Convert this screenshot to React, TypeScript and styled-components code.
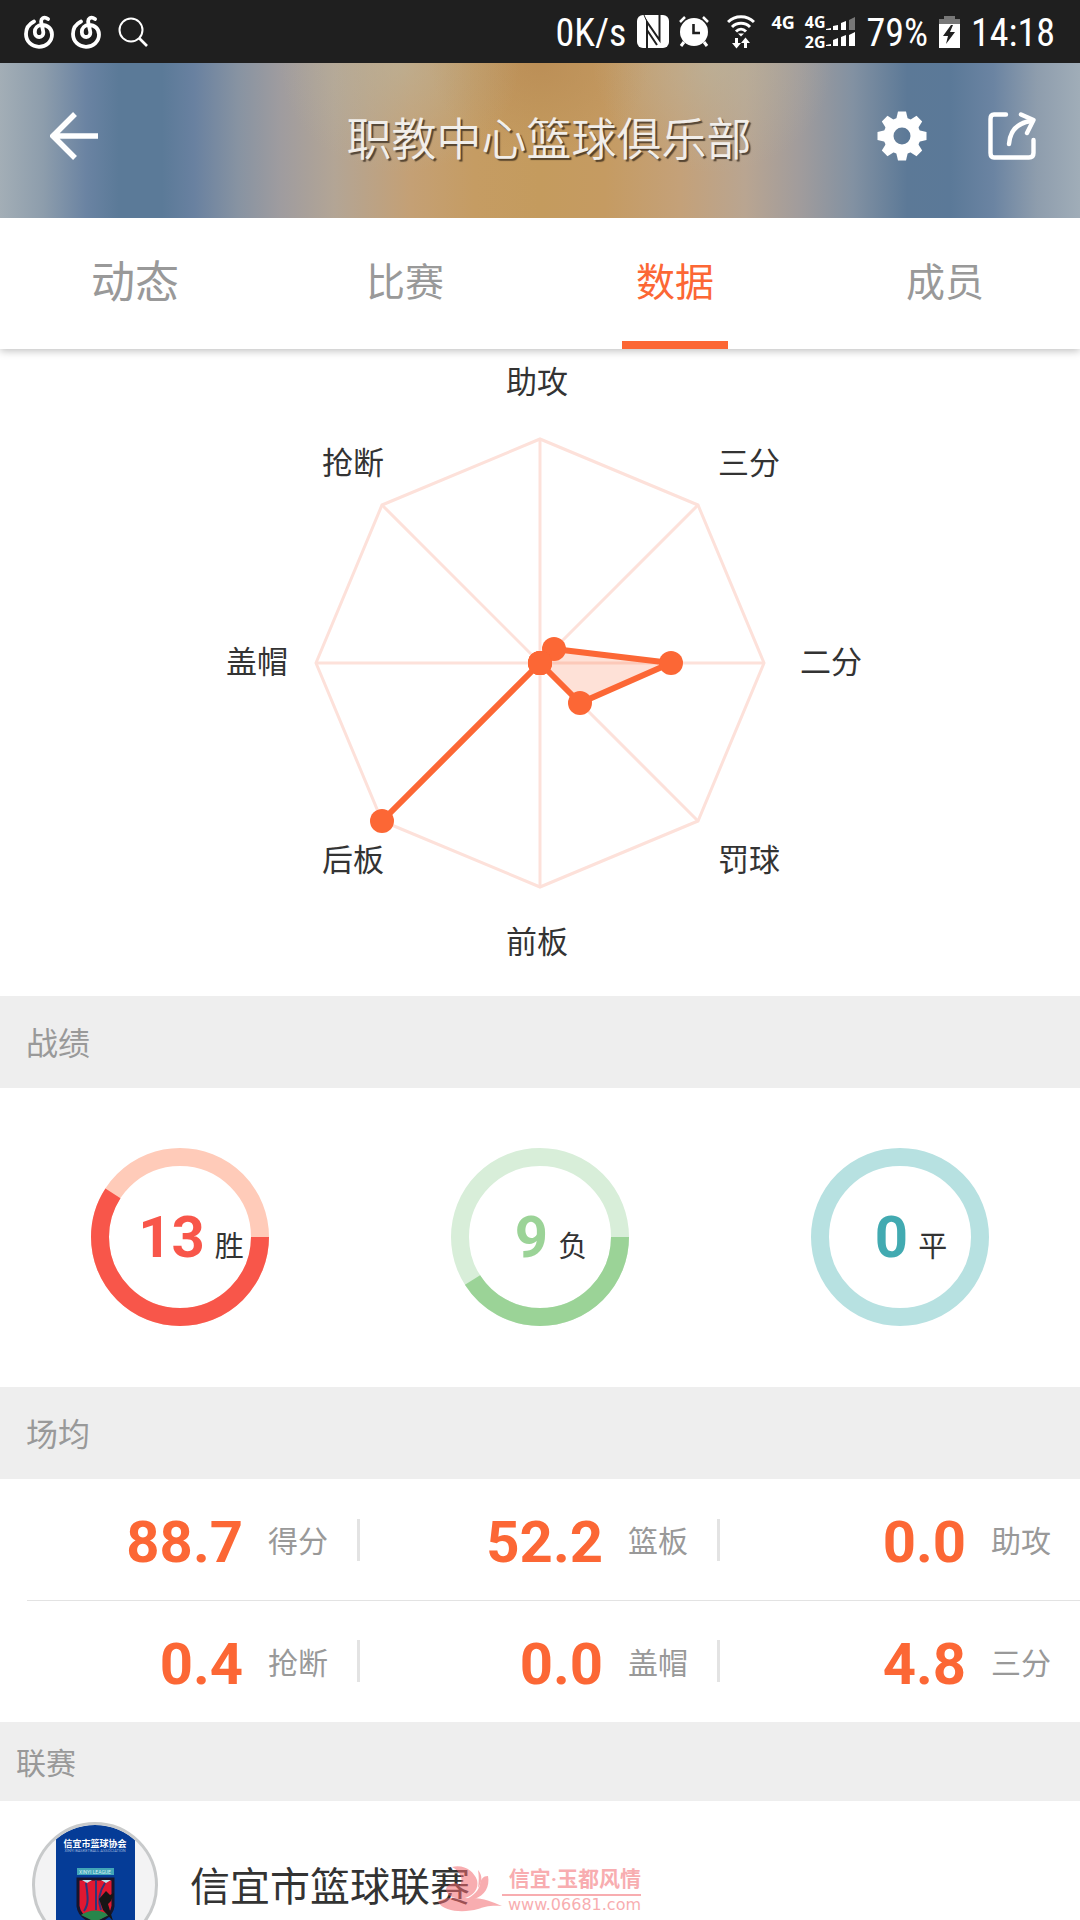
import styled, { createGlobalStyle } from "styled-components";

const ORANGE = "#fc6735";

const TABS = [
  { name: "动态", large: true },
  { name: "比赛" },
  { name: "数据", active: true },
  { name: "成员" },
];

// value is the share of the full axis, x / y is the middle of the label
const AXES = [
  { label: "助攻", value: 0, x: 537, y: 33 },
  { label: "三分", value: 0.09, x: 749, y: 114 },
  { label: "二分", value: 0.585, x: 831, y: 313 },
  { label: "罚球", value: 0.25, x: 749, y: 511 },
  { label: "前板", value: 0, x: 537, y: 593 },
  { label: "后板", value: 1, x: 353, y: 511 },
  { label: "盖帽", value: 0, x: 257, y: 313 },
  { label: "抢断", value: 0, x: 353, y: 114 },
];

const GAMES = 22;

const RECORDS = [
  { count: 13, label: "胜", color: "#f8564a", track: "#ffcbb9" },
  { count: 9, label: "负", color: "#9bd397", track: "#d8eed9" },
  { count: 0, label: "平", color: "#42aab1", track: "#b7e1e1" },
];

const AVERAGES = [
  [
    { value: "88.7", label: "得分" },
    { value: "52.2", label: "篮板" },
    { value: "0.0", label: "助攻" },
  ],
  [
    { value: "0.4", label: "抢断" },
    { value: "0.0", label: "盖帽" },
    { value: "4.8", label: "三分" },
  ],
];

const MusicIcon = () => (
  <svg width="30" height="34" viewBox="0 0 30 34" fill="none" stroke="#fff" strokeWidth="3.8" strokeLinecap="round">
    <path d="M10 6.5C5 9 2 13.500 2 19C2 26.500 7.800 31.800 15 31.800S28 26.500 28 19.500C28 13.500 23.500 10 18 10C13.500 10 10.800 13 10.800 17C10.800 20 12.800 22 15.200 22C18 22 19.800 19.500 19.200 16.500L17.300 7.500C16.500 3.500 20 1 24 4" />
  </svg>
);

const SearchIcon = () => (
  <svg width="30" height="30" viewBox="0 0 30 30" fill="none" stroke="#fff" strokeWidth="2">
    <circle cx="13" cy="13" r="11.500" />
    <path d="M21 21L29 29" strokeWidth="2.600" />
  </svg>
);

const NfcIcon = () => (
  <svg width="32" height="34" viewBox="0 0 32 34">
    <rect width="32" height="33" rx="6" fill="#fff" />
    <path d="M10 34V7L22.500 25V0M10 15L20 30" fill="none" stroke="#1f1f1f" strokeWidth="2" />
    <path d="M7 0L10.500 8" stroke="#1f1f1f" strokeWidth="1" />
  </svg>
);

const AlarmIcon = () => (
  <svg width="30" height="33" viewBox="0 0 30 33" fill="none" stroke="#fff">
    <circle cx="15" cy="17" r="14" fill="#fff" stroke="none" />
    <path d="M1 7L6 2M24 2L29 7" strokeWidth="2.500" />
    <path d="M5 27L2 31M25 27L28 31" strokeWidth="3" />
    <path d="M14.500 9V18H21" stroke="#1f1f1f" strokeWidth="2.600" />
  </svg>
);

const WifiIcon = () => (
  <svg width="28" height="34" viewBox="0 0 28 34" fill="none" stroke="#fff" strokeWidth="3">
    <path d="M1 7C8 0 20 0 27 7M5 12C10 7 18 7 23 12M9 16.500C12 13.500 16 13.500 19 16.500" />
    <path d="M11 18.500H17L14 21.500Z" fill="#fff" stroke="none" />
    <path d="M9.500 23V29M18.500 33V27" />
    <path d="M5 28H14L9.500 33.500ZM14 28H23L18.500 22.500Z" fill="#fff" stroke="none" />
  </svg>
);

const SignalIcon = () => (
  <svg width="30" height="30" viewBox="0 0 30 30" fill="#fff">
    <path d="M0 12L5 11V13H0ZM7 9L12 8V13H7ZM15 6L20 4V13H15Z" />
    <path d="M23 3L29 0V13H23Z" fill="#777" />
    <path d="M0 28L5 27V29H0ZM7 23L12 21V29H7ZM15 20L20 18V29H15ZM23 18L29 15V29H23Z" />
  </svg>
);

const BatteryIcon = () => (
  <svg width="21" height="32" viewBox="0 0 21 32">
    <path d="M5 0H16V3H21V8H0V3H5Z" fill="#777" />
    <path d="M0 8H21V32H0Z" fill="#fff" />
    <path d="M12 9L4 20H9L7 28L16 16H11L14 9Z" fill="#1f1f1f" />
  </svg>
);

const BackIcon = () => (
  <svg width="48" height="48" viewBox="0 0 48 48" fill="none" stroke="#fff" strokeWidth="5.500">
    <path d="M25 2L3 24L25 46M3 24H48" />
  </svg>
);

const GearIcon = () => (
  <svg width="50" height="50" viewBox="-25 -25 50 50" fill="#fff">
    <circle r="13.500" fill="none" stroke="#fff" strokeWidth="10" />
    {[0, 45, 90, 135, 180, 225, 270, 315].map((angle) => (
      <path key={angle} d="M-6 -16L-4 -24.500H4L6 -16Z" transform={`rotate(${angle})`} />
    ))}
  </svg>
);

const ShareIcon = () => (
  <svg width="48" height="48" viewBox="0 0 48 48" fill="none" stroke="#fff" strokeWidth="4.400" strokeLinecap="round" strokeLinejoin="round">
    <path d="M18 2.500H6Q2.500 2.500 2.500 7V41Q2.500 45.500 6 45.500H41Q45.500 45.500 45.500 41V28" />
    <path d="M21 32C22 19 29 11 43 9" />
    <path d="M33 2.500L45.500 8L39 21" />
  </svg>
);

const CENTER = { x: 540, y: 314 };
const RADIUS = 224;

const pointAt = (index: number, share: number) => {
  const angle = (index * Math.PI) / 4;
  return {
    x: Math.round(CENTER.x + Math.sin(angle) * RADIUS * share),
    y: Math.round(CENTER.y - Math.cos(angle) * RADIUS * share),
  };
};

const toPoints = (list: { x: number; y: number }[]) =>
  list.map(({ x, y }) => `${x},${y}`).join(" ");

const Radar = () => {
  const corners = AXES.map((_, i) => pointAt(i, 1));
  const dots = AXES.map(({ value }, i) => pointAt(i, value));

  return (
    <RadarChart viewBox="0 0 1080 647">
      <g fill="none" stroke="#fde1da" strokeWidth="3">
        <polygon points={toPoints(corners)} />
        {corners.map(({ x, y }, i) => (
          <line key={i} x1={CENTER.x} y1={CENTER.y} x2={x} y2={y} />
        ))}
      </g>
      <polygon
        points={toPoints(dots)}
        fill="rgba(252, 103, 53, 0.2)"
        stroke={ORANGE}
        strokeWidth="6"
        strokeLinejoin="round"
      />
      {dots.map(({ x, y }, i) => (
        <circle key={i} cx={x} cy={y} r="12" fill={ORANGE} />
      ))}
      {AXES.map(({ label, x, y }) => (
        <AxisLabel key={label} x={x} y={y + 11}>
          {label}
        </AxisLabel>
      ))}
    </RadarChart>
  );
};

const RING = 80;

const Ring = ({ count, label, color, track }: (typeof RECORDS)[number]) => {
  const length = 2 * Math.PI * RING;

  return (
    <RingBox>
      <svg width="178" height="178" viewBox="-89 -89 178 178" fill="none" strokeWidth="18">
        <circle r={RING} stroke={track} />
        {count > 0 && (
          <circle
            r={RING}
            stroke={color}
            strokeDasharray={`${(length * count) / GAMES} ${length}`}
          />
        )}
      </svg>
      <RingText>
        <RingCount $color={color}>{count}</RingCount>
        <RingLabel>{label}</RingLabel>
      </RingText>
    </RingBox>
  );
};

const LeagueLogo = () => (
  <svg width="126" height="126" viewBox="0 0 126 126">
    <defs>
      <clipPath id="logo">
        <circle cx="63" cy="63" r="60" />
      </clipPath>
    </defs>
    <circle cx="63" cy="63" r="62" fill="#f3f3f4" />
    <g clipPath="url(#logo)">
      <rect x="24" y="3" width="79" height="120" fill="#053c97" />
      <LogoName x="63" y="25">信宜市篮球协会</LogoName>
      <LogoSubtitle x="63" y="30">XINYI BASKETBALL ASSOCIATION</LogoSubtitle>
      <rect x="45" y="46" width="37" height="7" fill="#41a5b8" />
      <LogoLeague x="63" y="52">XINYI LEAGUE</LogoLeague>
      <path d="M46 57H81V84Q80 95 63 101Q47 95 46 84Z" fill="#e01831" stroke="#17152c" strokeWidth="3" />
      <path d="M50 58H60L55 61ZM69 58H79L74 61Z" fill="#bfe6ee" />
      <path d="M49 93Q63 84 77 93L63 100Z" fill="#28864b" />
      <path d="M54 61C56 75 57 82 52 89M64 58V88M73 61C67 70 66 80 69 88" fill="none" stroke="#303579" strokeWidth="2" />
      <path d="M74 69L78 73L82 71L79 79L76 82L81 99L71 88L67 77Z" fill="#171516" />
    </g>
    <circle cx="63" cy="63" r="61.500" fill="none" stroke="#c8cacb" strokeWidth="3" />
  </svg>
);

const WatermarkSwirl = () => (
  <svg width="68" height="48" viewBox="0 0 68 48" fill="#f36b70">
    <path d="M18 3C31 0 40 8 43 16C45 25 40 31 31 34C20 36 12 31 12 25C13 20 21 17 26 21C30 15 26 7 18 3Z" />
    <path d="M54 12C56 22 51 32 40 35L30 36C40 32 45 26 46 20C47 15 49 12 54 12Z" />
    <path d="M44 6C49 12 48 18 44 24C45 17 45 12 44 6Z" />
    <path d="M4 38C13 31 28 35 38 34C50 34 58 38 68 42C56 41 50 43 44 45C30 49 10 48 4 38Z" />
  </svg>
);

export default function App() {
  return (
    <Screen>
      <GlobalStyle />
      <StatusBar>
        <StatusGroup $gap={17}>
          <MusicIcon />
          <MusicIcon />
          <SearchIcon />
        </StatusGroup>
        <StatusGroup $gap={11}>
          <StatusText>0K/s</StatusText>
          <StatusIcons>
            <NfcIcon />
            <AlarmIcon />
            <WifiSlot>
              <WifiIcon />
            </WifiSlot>
            <NetworkLabel>4G</NetworkLabel>
            <Sim>
              <SimLabels>
                <span>4G</span>
                <span>2G</span>
              </SimLabels>
              <SignalIcon />
            </Sim>
          </StatusIcons>
          <StatusText>79%</StatusText>
          <BatteryIcon />
          <StatusText>14:18</StatusText>
        </StatusGroup>
      </StatusBar>

      <Header>
        <IconButton aria-label="返回">
          <BackIcon />
        </IconButton>
        <Title>职教中心篮球俱乐部</Title>
        <Actions>
          <IconButton aria-label="设置">
            <GearIcon />
          </IconButton>
          <IconButton aria-label="分享">
            <ShareIcon />
          </IconButton>
        </Actions>
      </Header>

      <Tabs>
        {TABS.map(({ name, large, active }) => (
          <Tab key={name} $large={large} $active={active}>
            {name}
          </Tab>
        ))}
      </Tabs>

      <Content>
        <Radar />

        <SectionTitle>战绩</SectionTitle>
        <Records>
          {RECORDS.map((record) => (
            <Ring key={record.label} {...record} />
          ))}
        </Records>

        <SectionTitle>场均</SectionTitle>
        <div>
          {AVERAGES.map((row, i) => (
            <StatRow key={i}>
              {row.map(({ value, label }) => (
                <Stat key={label}>
                  <StatValue>{value}</StatValue>
                  <StatLabel>{label}</StatLabel>
                </Stat>
              ))}
            </StatRow>
          ))}
        </div>

        <SectionTitle $compact>联赛</SectionTitle>
        <League>
          <LeagueLogo />
          <LeagueName>信宜市篮球联赛</LeagueName>
          <Watermark>
            <WatermarkSwirl />
            <WatermarkText>
              <WatermarkName>信宜·玉都风情</WatermarkName>
              <WatermarkUrl>www.06681.com</WatermarkUrl>
            </WatermarkText>
          </Watermark>
        </League>
      </Content>
    </Screen>
  );
}

const GlobalStyle = createGlobalStyle`
  * {
    box-sizing: border-box;
  }
  body {
    margin: 0;
    background: #fff;
    color: #333;
    font-family: Roboto, "Noto Sans CJK SC", sans-serif;
  }
  svg {
    display: block;
    flex-shrink: 0;
  }
`;

const Screen = styled.div`
  display: flex;
  flex-direction: column;
  height: 100vh;
  overflow: hidden;
`;

const StatusBar = styled.div`
  display: flex;
  flex-shrink: 0;
  align-items: center;
  justify-content: space-between;
  height: 63px;
  padding: 0 25px 0 24px;
  background: #1f1f1f;
  color: #fff;
`;

const StatusGroup = styled.div<{ $gap: number }>`
  display: flex;
  align-items: center;
  gap: ${({ $gap }) => $gap}px;
`;

const StatusIcons = styled.div`
  display: flex;
  align-items: center;
  gap: 10px;
`;

const StatusText = styled.span`
  padding-top: 2px;
  font-family: "Roboto Condensed", "Liberation Sans Narrow", Roboto, sans-serif;
  font-size: 38px;
  line-height: 42px;
`;

const WifiSlot = styled.div`
  padding: 0 6px 0 8px;
`;

const NetworkLabel = styled.span`
  align-self: flex-start;
  font: bold 18px/20px "Noto Sans", sans-serif;
`;

const Sim = styled.div`
  display: flex;
  align-items: center;
`;

const SimLabels = styled.div`
  display: flex;
  flex-direction: column;
  font: bold 16px/20px "Noto Sans", sans-serif;
`;

const Header = styled.header`
  display: grid;
  flex-shrink: 0;
  grid-template-columns: 1fr auto 1fr;
  align-items: center;
  height: 155px;
  padding: 0 44px 9px 50px;
  background:
    radial-gradient(ellipse 120px 110px at 37% 0, rgba(186, 182, 160, 0.55), transparent),
    radial-gradient(ellipse 120px 110px at 66% 0, rgba(186, 182, 160, 0.55), transparent),
    radial-gradient(ellipse 110px 90px at 50% 0, rgba(184, 138, 84, 0.7), transparent),
    linear-gradient(
      90deg,
      #a3aeb6 0%,
      #8d9dac 4%,
      #6a83a2 8%,
      #5b7a98 11%,
      #5b7a98 15%,
      #6981a0 18%,
      #8793a2 22%,
      #9f9c9f 26%,
      #b3a595 31%,
      #c4a075 38%,
      #c59c63 44%,
      #c49b5e 50%,
      #c59b62 56%,
      #c4a179 63%,
      #b9a591 69%,
      #a19c9c 74%,
      #8291a2 79%,
      #5c7997 84%,
      #5b7998 88%,
      #6b84a2 92%,
      #8e9dad 96%,
      #a0adb8 100%
    );
`;

const IconButton = styled.button`
  display: block;
  justify-self: start;
  padding: 0;
  border: none;
  background: none;
  cursor: pointer;
`;

const Title = styled.h1`
  margin: 0;
  padding: 9px 0 0 12px;
  color: #f1eeea;
  font-size: 45px;
  font-weight: 350;
  line-height: 60px;
  text-shadow: 2px 2px 1px rgba(40, 30, 20, 0.7);
`;

const Actions = styled.div`
  display: flex;
  align-items: center;
  justify-self: end;
  gap: 61px;
`;

const Tabs = styled.nav`
  display: grid;
  flex-shrink: 0;
  grid-template-columns: repeat(4, 1fr);
  position: relative;
  height: 131px;
  background: #fff;
  box-shadow: 0 2px 8px rgba(0, 0, 0, 0.25);
  clip-path: inset(0 0 -12px);
`;

const Tab = styled.button<{ $large?: boolean; $active?: boolean }>`
  justify-self: center;
  width: 106px;
  padding: 0 0 2px;
  border: none;
  border-bottom: 8px solid ${({ $active }) => ($active ? ORANGE : "transparent")};
  background: none;
  color: ${({ $active }) => ($active ? ORANGE : "#999")};
  font-family: inherit;
  font-size: ${({ $large }) => ($large ? 44 : 39)}px;
  white-space: nowrap;
  cursor: pointer;
`;

const Content = styled.main`
  flex: 1;
  min-height: 0;
  overflow-y: auto;
  scrollbar-width: none;
`;

const RadarChart = styled.svg`
  width: 100%;
  height: auto;
`;

const AxisLabel = styled.text`
  fill: #333;
  font-size: 31px;
  text-anchor: middle;
`;

const SectionTitle = styled.h2<{ $compact?: boolean }>`
  margin: 0;
  padding: ${({ $compact }) => ($compact ? "20px 16px 15px" : "26px 26px 22px")};
  background: #eee;
  color: #999;
  font-size: ${({ $compact }) => ($compact ? 30 : 32)}px;
  font-weight: normal;
  line-height: 44px;
`;

const Records = styled.div`
  display: grid;
  grid-template-columns: repeat(3, 1fr);
  justify-items: center;
  padding: 60px 0 61px;
`;

const RingBox = styled.div`
  display: grid;
  place-items: center;

  > * {
    grid-area: 1 / 1;
  }
`;

const RingText = styled.div`
  display: flex;
  align-items: baseline;
  gap: 10px;
  padding-left: 22px;
`;

const RingCount = styled.strong<{ $color: string }>`
  color: ${({ $color }) => $color};
  font-size: 58px;
  line-height: 68px;
`;

const RingLabel = styled.span`
  font-size: 29px;
  line-height: 40px;
`;

const StatRow = styled.div`
  display: grid;
  grid-template-columns: repeat(3, 1fr);
  height: 121px;

  & + & {
    height: 122px;
    background: linear-gradient(#e3e3e3, #e3e3e3) 27px 0 / 100% 1px no-repeat;
  }
`;

const Stat = styled.div`
  display: flex;
  align-items: center;
  justify-content: flex-end;
  gap: 25px;
  padding-right: 29px;

  &:not(:last-child)::after {
    content: "";
    width: 3px;
    height: 42px;
    margin: 0 -29px 0 4px;
    background: #e3e3e3;
  }
`;

const StatValue = styled.strong`
  padding-top: 5px;
  color: ${ORANGE};
  font-size: 58px;
  line-height: 68px;
`;

const StatLabel = styled.span`
  padding-top: 5px;
  color: #999;
  font-size: 30px;
  line-height: 44px;
`;

const League = styled.div`
  position: relative;
  display: flex;
  align-items: center;
  gap: 32px;
  padding: 21px 32px;
`;

const LeagueName = styled.span`
  padding-top: 6px;
  font-size: 40px;
  line-height: 56px;
`;

const LogoName = styled.text`
  fill: #fff;
  font-size: 9px;
  font-weight: bold;
  text-anchor: middle;
`;

const LogoSubtitle = styled.text`
  fill: #9db4dc;
  font-size: 4px;
  text-anchor: middle;
`;

const LogoLeague = styled.text`
  fill: #d6f1f4;
  font-size: 5px;
  text-anchor: middle;
`;

const Watermark = styled.div`
  position: absolute;
  top: 63px;
  left: 434px;
  display: flex;
  opacity: 0.55;
  color: #f36b70;
`;

const WatermarkText = styled.div`
  width: 139px;
  text-align: right;
`;

const WatermarkName = styled.div`
  border-bottom: 2px solid;
  font-size: 21px;
  font-weight: bold;
  line-height: 30px;
`;

const WatermarkUrl = styled.div`
  font: 16px/18px "DejaVu Sans", sans-serif;
`;
